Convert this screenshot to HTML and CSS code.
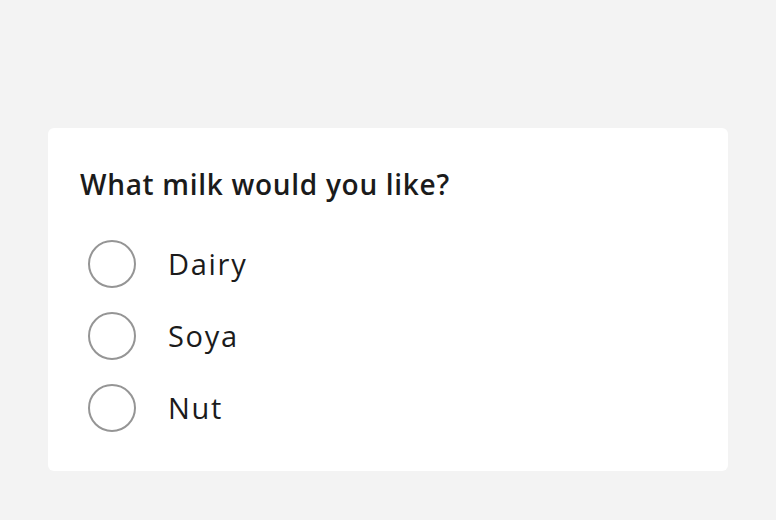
FILE: index.html
```html
<!DOCTYPE html>
<html lang="en">
<head>
<meta charset="utf-8">
<title>Milk</title>
<link rel="stylesheet" href="styles.css">
</head>
<body>
<div class="page">
  <form class="card">
    <fieldset class="fieldset">
      <legend class="legend">What milk would you like?</legend>
      <div class="radios">
        <label class="radio"><input class="radio-input" type="radio" name="milk" value="dairy"><span class="radio-mark"></span><span class="radio-label">Dairy</span></label>
        <label class="radio"><input class="radio-input" type="radio" name="milk" value="soya"><span class="radio-mark"></span><span class="radio-label">Soya</span></label>
        <label class="radio"><input class="radio-input" type="radio" name="milk" value="nut"><span class="radio-mark"></span><span class="radio-label">Nut</span></label>
      </div>
    </fieldset>
  </form>
</div>
</body>
</html>
```
FILE: styles.css
```css
html, body {
  margin: 0;
  padding: 0;
  background: #f3f3f3;
}
body {
  font-family: "Open Sans", "Noto Sans", sans-serif;
  color: #1b1b1b;
}
.page {
  padding: 128px 48px 48px 48px;
}
.card {
  background: #ffffff;
  border-radius: 6px;
  padding: 32px 32px 40px 32px;
  height: 343px;
  box-sizing: border-box;
}
.fieldset {
  border: 0;
  margin: 0;
  padding: 0;
  min-width: 0;
}
.legend {
  padding: 0;
  font-size: 28px;
  font-weight: 600;
  line-height: 48px;
  letter-spacing: 0.7px;
}
.radios {
  display: flex;
  flex-direction: column;
  gap: 24px;
  margin-top: 32px;
  padding-left: 8px;
}
.radio {
  display: flex;
  align-items: center;
  gap: 32px;
  height: 48px;
  position: relative;
}
.radio-input {
  position: absolute;
  opacity: 0;
  width: 48px;
  height: 48px;
  margin: 0;
}
.radio-mark {
  width: 48px;
  height: 48px;
  box-sizing: border-box;
  border: 2px solid #959595;
  border-radius: 50%;
  flex: none;
}
.radio-label {
  font-size: 29px;
  line-height: 40px;
  letter-spacing: 1.7px;
}
```
